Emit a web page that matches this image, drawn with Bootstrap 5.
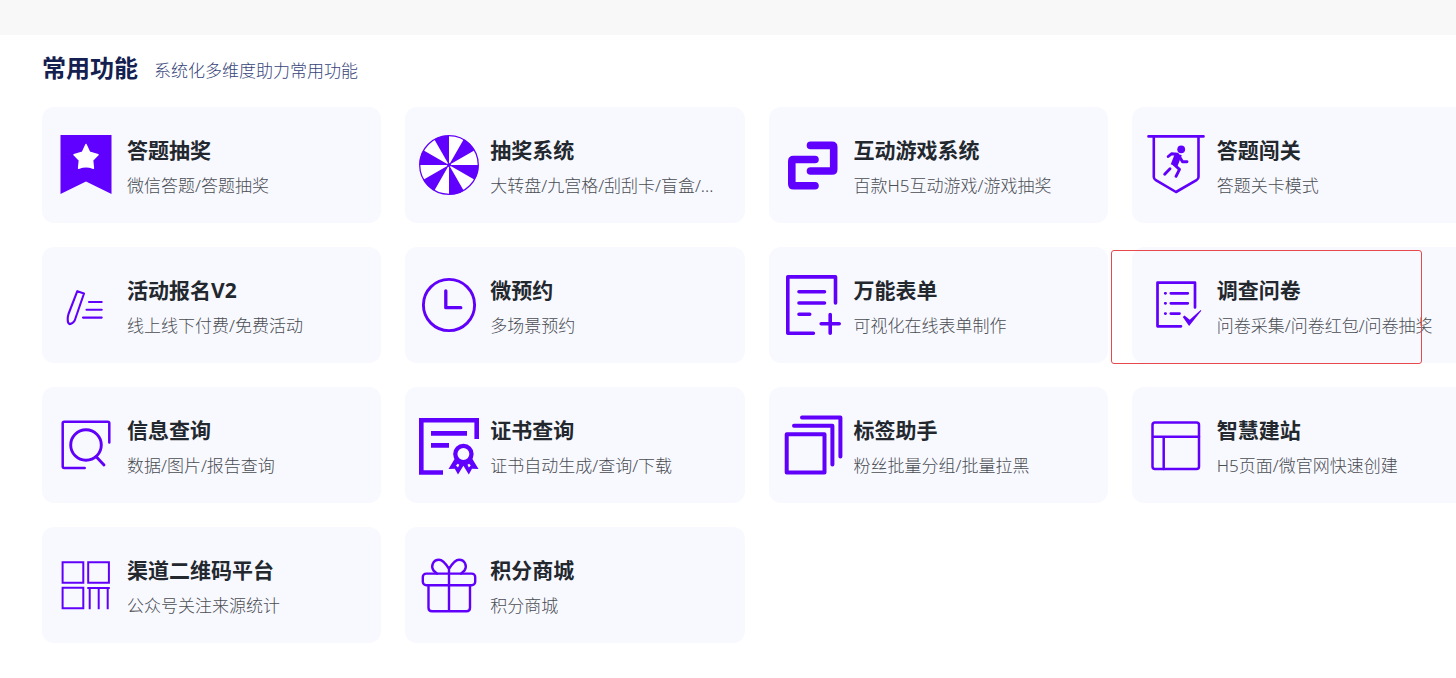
<!DOCTYPE html>
<html lang="zh-CN">
<head>
<meta charset="utf-8">
<meta name="viewport" content="width=device-width, initial-scale=1">
<title>常用功能</title>
<link href="https://cdn.jsdelivr.net/npm/bootstrap@5.3.0/dist/css/bootstrap.min.css" rel="stylesheet">
<style>
  body { font-family: "Noto Sans", "Noto Sans CJK SC", sans-serif; background: #fff; }
  .top-band { height: 35px; background: #f8f8f8; }
  .features { padding: 15px 0 36px 42px; }
  .features-head { margin-bottom: 21px; }
  .features-title { font-size: 24px; line-height: 36px; color: #14204f; }
  .features-note { padding-top: 6px; font-size: 17px; line-height: 28px; font-weight: 300; color: #36447a; }
  /* the last column runs on past the window's edge */
  .features-grid { margin-right: -27px; }
  .feature { padding: 28px 14px 22px; gap: 11px; border-radius: 12px; background: #f8f9ff; }
  .feature-name { margin-bottom: 6px; font-size: 21px; line-height: 30px; color: #23282e; }
  .feature-note { font-size: 17px; line-height: 30px; font-weight: 300; color: #4a4d52; }
  .icon { width: 60px; height: 60px; fill: none; stroke: #6000fa; stroke-linecap: round; stroke-linejoin: round; }
  .highlight { top: 3px; bottom: -1px; left: -21px; right: 49px; border: 1px solid #e5484d; border-radius: 3px; pointer-events: none; z-index: 1; }
</style>
</head>
<body>
<div class="top-band"></div>
<main class="features overflow-hidden">
  <header class="features-head d-flex align-items-center gap-3">
    <h1 class="features-title fw-bold mb-0">常用功能</h1>
    <p class="features-note mb-0">系统化多维度助力常用功能</p>
  </header>
  <div class="features-grid row row-cols-4 g-4">
    <div class="col">
      <a href="#" class="feature d-flex align-items-start text-decoration-none">
        <svg class="icon flex-shrink-0" viewBox="0 0 60 60" aria-hidden="true"><path fill="#6000ff" stroke="none" d="M4.500 0h51v59L30 46.600 4.500 59z"/><path fill="#fff" stroke="#fff" stroke-width="1.500" d="M30 9.500l3.600 7.800 8.400 2.400-5.400 5.600.8 8q-7.400-3-14.800 0l.8-8-5.400-5.600 8.400-2.400z"/></svg>
        <div class="text-nowrap"><h2 class="feature-name fw-bold">答题抽奖</h2><p class="feature-note mb-0">微信答题/答题抽奖</p></div>
      </a>
    </div>
    <div class="col">
      <a href="#" class="feature d-flex align-items-start text-decoration-none">
        <svg class="icon flex-shrink-0" viewBox="0 0 60 60" aria-hidden="true"><circle cx="30" cy="30" r="29.300" fill="#fff" stroke-width="1.300"/><circle cx="30" cy="30" r="14.800" stroke="#6000ff" stroke-width="29.600" stroke-linecap="butt" pathLength="12" stroke-dasharray="1 1"/><circle cx="30" cy="30" r="2" fill="#6000ff" stroke="none"/></svg>
        <div class="text-nowrap"><h2 class="feature-name fw-bold">抽奖系统</h2><p class="feature-note mb-0">大转盘/九宫格/刮刮卡/盲盒/...</p></div>
      </a>
    </div>
    <div class="col">
      <a href="#" class="feature d-flex align-items-start text-decoration-none">
        <svg class="icon flex-shrink-0" viewBox="0 0 60 60" aria-hidden="true"><path stroke="#6000ff" stroke-width="7.600" d="M27.500 10.400H49q1.700 0 1.700 1.700v22.200q0 1.700-1.700 1.700H27.500M32 24.500H10.500q-1.700 0-1.700 1.700V49q0 1.700 1.700 1.700H32"/></svg>
        <div class="text-nowrap"><h2 class="feature-name fw-bold">互动游戏系统</h2><p class="feature-note mb-0">百款H5互动游戏/游戏抽奖</p></div>
      </a>
    </div>
    <div class="col">
      <a href="#" class="feature d-flex align-items-start text-decoration-none">
        <svg class="icon flex-shrink-0" viewBox="0 0 60 60" aria-hidden="true"><path stroke-width="2.600" d="M2.500 1.400h55M7.800 2v40q0 2 2 3.200L30 57l20.500-11.800q2-1.200 2-3.200V2"/><circle cx="35.200" cy="14.300" r="3.900" fill="#6000ff" stroke="none"/><path stroke-width="7" stroke-linecap="butt" d="M32.500 19l-4.500 11.500"/><path stroke-width="2.900" d="M22.200 21.500l3.300-2.700 6 .5M34 22.500l2.500 4.300H41M28 29.500l5.500 4.800-3.500 7M24 33.700l-5.300 5.500"/></svg>
        <div class="text-nowrap"><h2 class="feature-name fw-bold">答题闯关</h2><p class="feature-note mb-0">答题关卡模式</p></div>
      </a>
    </div>
    <div class="col">
      <a href="#" class="feature d-flex align-items-start text-decoration-none">
        <svg class="icon flex-shrink-0" viewBox="0 0 60 60" aria-hidden="true"><path stroke-width="2.100" d="M21.300 16.200l6.700 2.300-9.300 27q-2.200 3.600-5 3.600-2-.6-2-4.600 0-3 .8-5.500zM33 27h12.700M30.500 34.700h15.200M27 42.600h18.700"/></svg>
        <div class="text-nowrap"><h2 class="feature-name fw-bold">活动报名V2</h2><p class="feature-note mb-0">线上线下付费/免费活动</p></div>
      </a>
    </div>
    <div class="col">
      <a href="#" class="feature d-flex align-items-start text-decoration-none">
        <svg class="icon flex-shrink-0" viewBox="0 0 60 60" aria-hidden="true"><circle cx="30" cy="30" r="25.600" stroke-width="2.900"/><path stroke-width="3.300" d="M26.800 15.800v16.900h15"/></svg>
        <div class="text-nowrap"><h2 class="feature-name fw-bold">微预约</h2><p class="feature-note mb-0">多场景预约</p></div>
      </a>
    </div>
    <div class="col">
      <a href="#" class="feature d-flex align-items-start text-decoration-none">
        <svg class="icon flex-shrink-0" viewBox="0 0 60 60" aria-hidden="true"><path stroke-width="3.600" d="M52.500 28V1.900H4.800v56.300h25.600M16 16.800h25.500M16 28h25.500M16 39.200h10.700M38.200 48.800h18M47.200 39.500v18.700"/></svg>
        <div class="text-nowrap"><h2 class="feature-name fw-bold">万能表单</h2><p class="feature-note mb-0">可视化在线表单制作</p></div>
      </a>
    </div>
    <div class="col">
      <div class="position-relative">
        <a href="#" class="feature d-flex align-items-start text-decoration-none">
          <svg class="icon flex-shrink-0" viewBox="0 0 60 60" aria-hidden="true"><path stroke-width="2.700" d="M49 32.500V7.700H11.500v43.600H35M19.200 18.300h.4M24.800 18.300h17M19.200 28.300h.4M24.800 28.300h17M19.200 38.600h.4M24.800 38.600h8.700"/><path fill="#6000fa" stroke="none" d="M36.800 42l1.700-1.500 5.200 4.300 11-9.700.6.600-12.200 15.300z"/></svg>
          <div class="text-nowrap"><h2 class="feature-name fw-bold">调查问卷</h2><p class="feature-note mb-0">问卷采集/问卷红包/问卷抽奖</p></div>
        </a>
        <div class="highlight position-absolute"></div>
      </div>
    </div>
    <div class="col">
      <a href="#" class="feature d-flex align-items-start text-decoration-none">
        <svg class="icon flex-shrink-0" viewBox="0 0 60 60" aria-hidden="true"><path stroke-width="2.500" d="M53.300 27.500V8.200q0-1.500-1.500-1.500H8.200q-1.500 0-1.500 1.500v43.300q0 1.500 1.500 1.500h20.500"/><circle cx="30" cy="30" r="15.300" stroke-width="2.900"/><path stroke-width="2.900" d="M40.700 42.300l7.300 7.600"/></svg>
        <div class="text-nowrap"><h2 class="feature-name fw-bold">信息查询</h2><p class="feature-note mb-0">数据/图片/报告查询</p></div>
      </a>
    </div>
    <div class="col">
      <a href="#" class="feature d-flex align-items-start text-decoration-none">
        <svg class="icon flex-shrink-0" viewBox="0 0 60 60" aria-hidden="true"><g stroke="#6000ff" stroke-linecap="butt" stroke-linejoin="miter"><path stroke-width="4.600" d="M57.700 24V5.300H2.300v52.200H24M12 18.400h36M12 30.400h18"/><circle cx="44.400" cy="39" r="8.100" stroke-width="4.300"/></g><path fill="#6000ff" fill-rule="evenodd" stroke="none" d="M36.500 42.500L29.500 54l6.300-.3L39 59.500l5.400-8.700 5.400 8.700 3.200-5.800 6.500.3-7-11.500-8.100 5zM38.700 48.800l-1.700 1.800 2 1.800 1.300-2.700zM50.100 48.800l1.700 1.800-2 1.800-1.300-2.700z"/></svg>
        <div class="text-nowrap"><h2 class="feature-name fw-bold">证书查询</h2><p class="feature-note mb-0">证书自动生成/查询/下载</p></div>
      </a>
    </div>
    <div class="col">
      <a href="#" class="feature d-flex align-items-start text-decoration-none">
        <svg class="icon flex-shrink-0" viewBox="0 0 60 60" aria-hidden="true"><path stroke-width="4" d="M3.700 19.300h37.800v38.100H3.700zM11 10.800h38.400v38.800M19 2.500h38.400v38.900"/></svg>
        <div class="text-nowrap"><h2 class="feature-name fw-bold">标签助手</h2><p class="feature-note mb-0">粉丝批量分组/批量拉黑</p></div>
      </a>
    </div>
    <div class="col">
      <a href="#" class="feature d-flex align-items-start text-decoration-none">
        <svg class="icon flex-shrink-0" viewBox="0 0 60 60" aria-hidden="true"><rect x="6.500" y="7.500" width="46.500" height="46.500" rx="2.500" stroke-width="2.500"/><path stroke-width="2.500" d="M7 21.700h46M17.700 21.700V54"/></svg>
        <div class="text-nowrap"><h2 class="feature-name fw-bold">智慧建站</h2><p class="feature-note mb-0">H5页面/微官网快速创建</p></div>
      </a>
    </div>
    <div class="col">
      <a href="#" class="feature d-flex align-items-start text-decoration-none">
        <svg class="icon flex-shrink-0" viewBox="0 0 60 60" aria-hidden="true"><path stroke-width="2" stroke-linecap="butt" stroke-linejoin="miter" d="M6.600 7.300h20.700v20.500H6.600zM32.200 7.300h20.700v20.500H32.200zM6.600 32.700h20.700v20.600H6.600zM31.300 33h22.500M33.700 33v21.200M42.700 33v21.200M51.700 33v21.200"/></svg>
        <div class="text-nowrap"><h2 class="feature-name fw-bold">渠道二维码平台</h2><p class="feature-note mb-0">公众号关注来源统计</p></div>
      </a>
    </div>
    <div class="col">
      <a href="#" class="feature d-flex align-items-start text-decoration-none">
        <svg class="icon flex-shrink-0" viewBox="0 0 60 60" aria-hidden="true"><g stroke-width="2.400"><rect x="3.800" y="18.600" width="52.400" height="11.700" rx="3.500"/><path d="M9.500 30.300v22.500q0 3.500 3.500 3.500h34.500q3.500 0 3.500-3.500V30.300M30 13v43M30 14c-2.500-4-5.500-9.200-10-9.200-6 0-8.500 6.200-5.500 10.700L18 18.600M30 14c2.500-4 5.500-9.200 10-9.200 6 0 8.500 6.200 5.500 10.700L42 18.600"/></g></svg>
        <div class="text-nowrap"><h2 class="feature-name fw-bold">积分商城</h2><p class="feature-note mb-0">积分商城</p></div>
      </a>
    </div>
  </div>
</main>
<script src="https://cdn.jsdelivr.net/npm/bootstrap@5.3.0/dist/js/bootstrap.bundle.min.js"></script>
</body>
</html>
